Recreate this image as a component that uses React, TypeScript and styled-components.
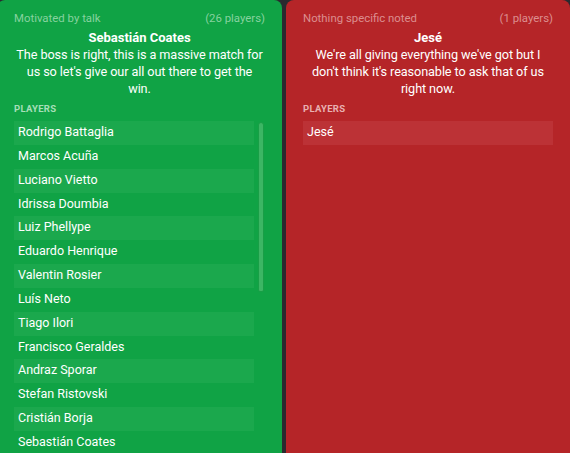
import React from "react";
import styled, { createGlobalStyle } from "styled-components";

const Global = createGlobalStyle`
  html, body { margin: 0; padding: 0; background: #2a2a2f; overflow: hidden; }
  body { font-family: Roboto, "Liberation Sans", sans-serif; }
`;

const Page = styled.div`
  display: grid;
  grid-template-columns: 285px 284px;
  column-gap: 4px;
  margin-left: -3px;
  width: 573px;
  height: 453px;
  overflow: hidden;
  background: #2a2a2f;
`;

type Tone = "green" | "red";

const palette = {
  green: {
    bg: "#10a345",
    row: "#1ba84d",
    muted: "#86d29f",
    label: "#a6dfb8",
  },
  red: {
    bg: "#b52528",
    row: "#bc3236",
    muted: "#dc8e8f",
    label: "#e8b0b1",
  },
};

const Panel = styled.section<{ $tone: Tone }>`
  background: ${(p) => palette[p.$tone].bg};
  border-radius: 8px 8px 0 0;
  padding: 11px 17px 0 17px;
  display: flex;
  flex-direction: column;
  color: #ffffff;
  min-height: 0;
  overflow: hidden;
`;

const Meta = styled.div<{ $tone: Tone }>`
  display: flex;
  justify-content: space-between;
  font-size: 11.4px;
  line-height: 15px;
  color: ${(p) => palette[p.$tone].muted};
`;

const Name = styled.div`
  text-align: center;
  font-weight: 700;
  font-size: 13px;
  line-height: 17px;
  margin-top: 3px;
`;

const Quote = styled.div`
  text-align: center;
  font-size: 12.7px;
  letter-spacing: -0.1px;
  line-height: 17px;
`;

const QuoteLine = styled.span`
  display: block;
  white-space: nowrap;
`;

const Label = styled.div<{ $tone: Tone }>`
  font-size: 9.5px;
  font-weight: 700;
  letter-spacing: 0.3px;
  color: ${(p) => palette[p.$tone].label};
  margin-top: 6px;
  line-height: 12px;
`;

const ListArea = styled.div`
  display: flex;
  gap: 4px;
  margin-top: 6px;
  flex: 1;
  min-height: 0;
`;

const List = styled.ul`
  list-style: none;
  margin: 0;
  padding: 0;
  flex: 1;
`;

const Row = styled.li<{ $tone: Tone; $striped: boolean }>`
  height: 23.85px;
  box-sizing: border-box;
  padding: 0 0 0 4px;
  line-height: 21px;
  font-size: 12.5px;
  background: ${(p) => (p.$striped ? palette[p.$tone].row : "transparent")};
  white-space: nowrap;
`;

const Track = styled.div`
  width: 6px;
  flex: none;
  padding-top: 1px;
  margin-right: 1px;
`;

const Thumb = styled.div`
  height: 170px;
  border-radius: 3px 3px 2px 2px;
  background: #3cb664;
  border: 1px solid #199e46;
  box-sizing: border-box;
`;

const greenPlayers = [
  "Rodrigo Battaglia",
  "Marcos Acuña",
  "Luciano Vietto",
  "Idrissa Doumbia",
  "Luiz Phellype",
  "Eduardo Henrique",
  "Valentin Rosier",
  "Luís Neto",
  "Tiago Ilori",
  "Francisco Geraldes",
  "Andraz Sporar",
  "Stefan Ristovski",
  "Cristián Borja",
  "Sebastián Coates",
];

const Card: React.FC<{
  tone: Tone;
  title: string;
  count: string;
  name: string;
  quote: string[];
  players: string[];
  scroll?: boolean;
}> = ({ tone, title, count, name, quote, players, scroll }) => (
  <Panel $tone={tone}>
    <Meta $tone={tone}>
      <span>{title}</span>
      <span>{count}</span>
    </Meta>
    <Name>{name}</Name>
    <Quote>
      {quote.map((line) => (
        <QuoteLine key={line}>{line}</QuoteLine>
      ))}
    </Quote>
    <Label $tone={tone}>PLAYERS</Label>
    <ListArea>
      <List>
        {players.map((p, i) => (
          <Row key={p} $tone={tone} $striped={i % 2 === 0}>
            {p}
          </Row>
        ))}
      </List>
      {scroll && (
        <Track>
          <Thumb />
        </Track>
      )}
    </ListArea>
  </Panel>
);

export default function App() {
  return (
    <>
      <Global />
      <Page>
        <Card
          tone="green"
          title="Motivated by talk"
          count="(26 players)"
          name="Sebastián Coates"
          quote={[
            "The boss is right, this is a massive match for",
            "us so let's give our all out there to get the",
            "win.",
          ]}
          players={greenPlayers}
          scroll
        />
        <Card
          tone="red"
          title="Nothing specific noted"
          count="(1 players)"
          name="Jesé"
          quote={[
            "We're all giving everything we've got but I",
            "don't think it's reasonable to ask that of us",
            "right now.",
          ]}
          players={["Jesé"]}
        />
      </Page>
    </>
  );
}
